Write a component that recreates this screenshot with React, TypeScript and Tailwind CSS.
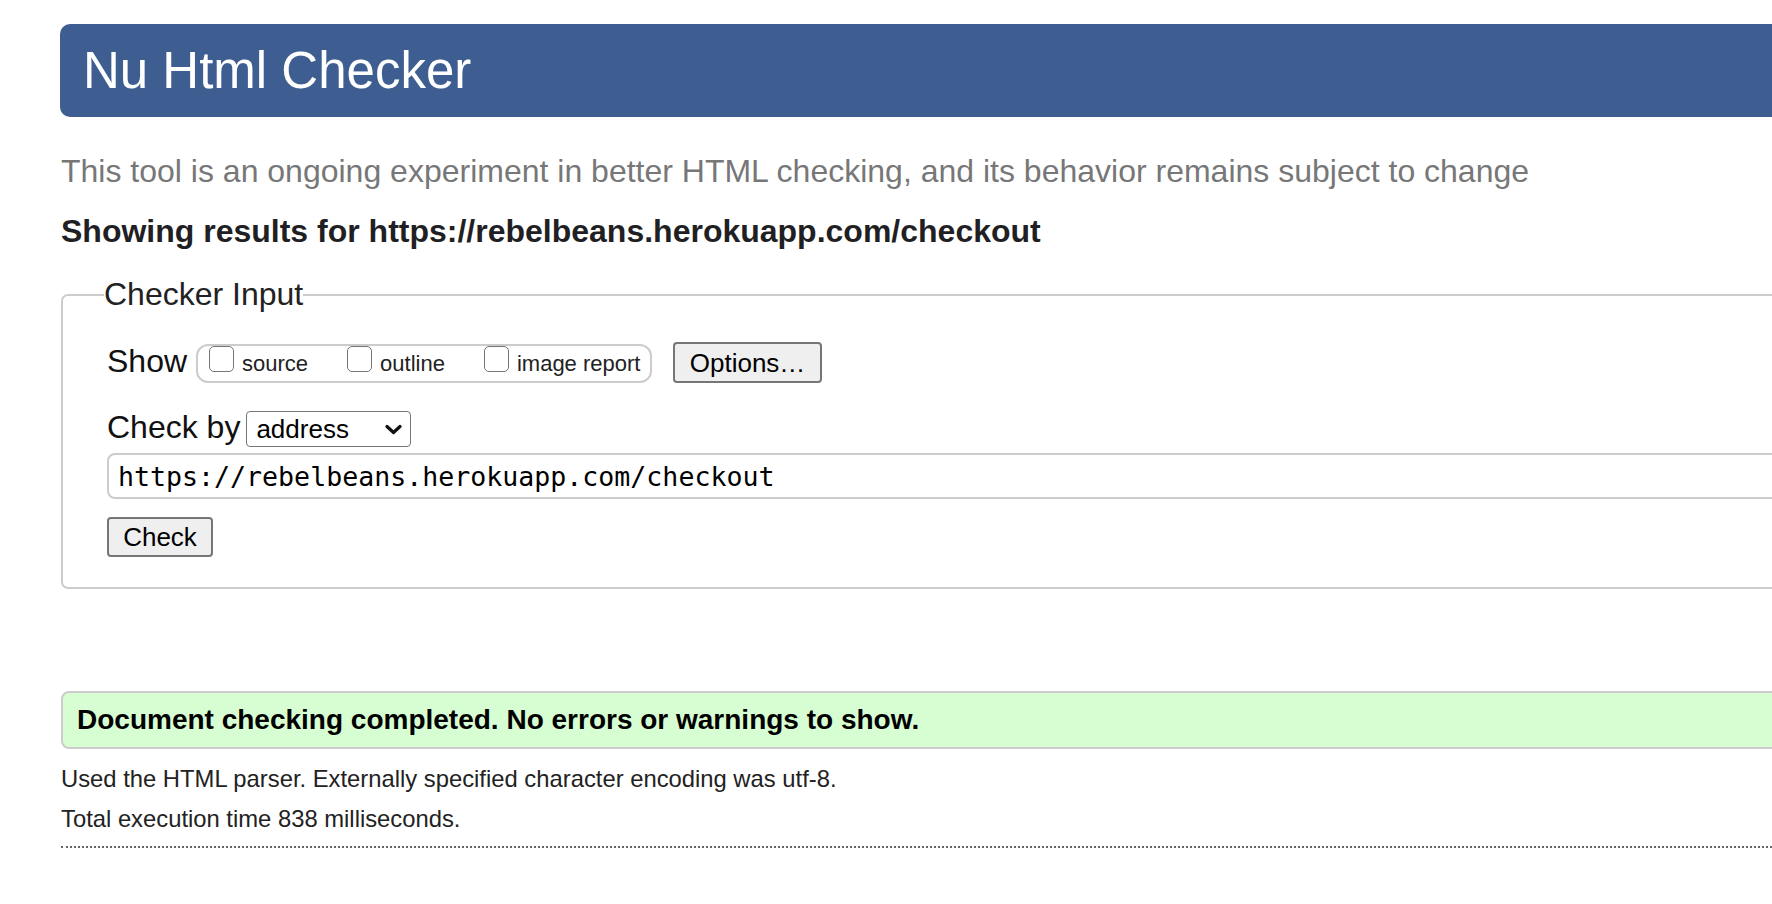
import { useState } from 'react'

const sans = "font-['Liberation_Sans',Arial,Helvetica,sans-serif]"

function Checkbox({ label, first = false }: { label: string; first?: boolean }) {
  const [on, setOn] = useState(false)
  return (
    <label className={`flex items-start ${first ? '' : 'ml-[39px]'}`}>
      <input
        type="checkbox"
        checked={on}
        onChange={(e) => setOn(e.target.checked)}
        className="m-0 h-[26px] w-[25px] shrink-0 appearance-none rounded-[5px] border-[1.5px] border-[#767676] bg-white checked:bg-[#0b57d0]"
      />
      <span className="ml-[8px] mt-[5px] whitespace-nowrap text-[22px] leading-[25px] text-[#222]">{label}</span>
    </label>
  )
}

export default function App() {
  const [url, setUrl] = useState('https://rebelbeans.herokuapp.com/checkout')

  return (
    <div className={`min-h-screen w-full overflow-hidden bg-white ${sans}`}>
      <div className="ml-[60px] w-[1760px] pt-[24px]">
        <h1 className="flex h-[93px] items-center rounded-l-[10px] bg-[#3e5e91] pl-[23px] text-[51px] font-normal leading-none text-white">
          Nu Html Checker
        </h1>

        <div className="pl-px">
          <p className="mt-[36px] whitespace-nowrap text-[32px] leading-[37px] text-[#777]">
            This tool is an ongoing experiment in better HTML checking, and its behavior remains subject to change
          </p>
          <p className="mt-[23px] whitespace-nowrap text-[32px] font-bold leading-[37px] text-[#1f1f24]">
            Showing results for https://rebelbeans.herokuapp.com/checkout
          </p>

          <fieldset className="mt-[26px] rounded-[7px] border-2 border-[#ccc] pb-[30px]">
            <legend className="ml-[41px] p-0 text-[32px] leading-[37px] text-[#222]">Checker Input</legend>

            <div className="pl-[44px] text-[#111]">
              <div className="mt-[29px] flex h-[41px] items-start">
                <span className="text-[32px] leading-[38px]">Show</span>
                <div className="ml-[9px] mt-[2px] flex h-[39px] w-[456px] items-start rounded-[12px] border-2 border-[#ccc] pl-[11px]">
                  <Checkbox label="source" first />
                  <Checkbox label="outline" />
                  <Checkbox label="image report" />
                </div>
                <button
                  type="button"
                  className="ml-[21px] h-[41px] w-[149px] rounded-[4px] border-2 border-[#767676] bg-[#efefef] text-[26px] leading-none text-black"
                >
                  Options…
                </button>
              </div>

              <div className="mt-[28px] flex h-[36px] items-start">
                <span className="text-[32px] leading-[32px]">Check by</span>
                <div className="ml-[6px] flex h-[36px] w-[165px] items-center justify-between rounded-[4px] border-[1.5px] border-[#767676] bg-white pl-[9px] pr-[8px]">
                  <span className="text-[26px] leading-none text-black">address</span>
                  <svg width="17" height="11" viewBox="0 0 17 11" fill="none">
                    <path d="M2 2.5 L8.5 8.5 L15 2.5" stroke="#111" strokeWidth="3.2" strokeLinecap="round" strokeLinejoin="round" />
                  </svg>
                </div>
              </div>

              <input
                type="text"
                value={url}
                onChange={(e) => setUrl(e.target.value)}
                className="mt-[6px] block h-[46px] w-full rounded-[8px] border-2 border-[#ccc] bg-white pl-[9px] font-['DejaVu_Sans_Mono',Menlo,monospace] text-[26.6px] text-black outline-none"
              />

              <button
                type="button"
                className="mt-[18px] h-[40px] w-[106px] rounded-[4px] border-2 border-[#767676] bg-[#efefef] text-[26px] leading-none text-black"
              >
                Check
              </button>
            </div>
          </fieldset>

          <div className="mt-[102px] flex h-[58px] items-center rounded-[8px] border-2 border-[#ccc] bg-[#d7fdd2] pl-[14px]">
            <p className="text-[28px] font-bold leading-[32px] text-black">
              Document checking completed. No errors or warnings to show.
            </p>
          </div>

          <p className="mt-[16px] text-[23.8px] leading-[28px] text-[#222]">
            Used the HTML parser. Externally specified character encoding was utf-8.
          </p>
          <p className="mt-[12px] text-[23.8px] leading-[28px] text-[#222]">Total execution time 838 milliseconds.</p>

          <div className="mt-[13px] border-t-2 border-dotted border-[#666]" />
        </div>
      </div>
    </div>
  )
}
